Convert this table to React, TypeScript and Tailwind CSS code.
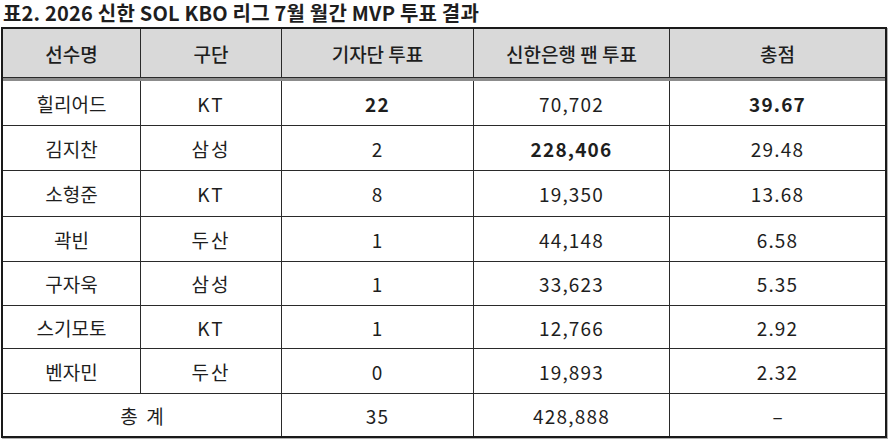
import React from "react";

const font = { fontFamily: '"Noto Sans CJK KR", "Noto Sans", sans-serif' };

type Row = { name: string; team: string; press: string; fan: string; total: string; bp?: boolean; bf?: boolean; bt?: boolean; h: string };

const rows: Row[] = [
  { name: "힐리어드", team: "KT", press: "22", fan: "70,702", total: "39.67", bp: true, bt: true, h: "h-[45px]" },
  { name: "김지찬", team: "삼성", press: "2", fan: "228,406", total: "29.48", bf: true, h: "h-[45px]" },
  { name: "소형준", team: "KT", press: "8", fan: "19,350", total: "13.68", h: "h-[46px]" },
  { name: "곽빈", team: "두산", press: "1", fan: "44,148", total: "6.58", h: "h-[45px]" },
  { name: "구자욱", team: "삼성", press: "1", fan: "33,623", total: "5.35", h: "h-[44px]" },
  { name: "스기모토", team: "KT", press: "1", fan: "12,766", total: "2.92", h: "h-[43px]" },
  { name: "벤자민", team: "두산", press: "0", fan: "19,893", total: "2.32", h: "h-[45px]" },
];

const cell = "flex items-center justify-center border-r border-b border-[#2a2a2a]";
const last = "flex items-center justify-center border-b border-[#2a2a2a]";
const num = "tracking-[1.2px]";

export default function App() {
  return (
    <div className="w-[890px] h-[447px] bg-white text-[#1e1e1e]" style={font}>
      <div className="h-[27px] pl-[3px] text-[20px] font-bold leading-[25px] tracking-[0.2px] whitespace-nowrap">
        표2. 2026 신한 SOL KBO 리그 7월 월간 MVP 투표 결과
      </div>
      <div className="ml-[1px] w-[886px] border-2 border-[#1a1a1a] shadow-[1px_1px_0_#b0b0b0] text-[19px] leading-none">
        <div className="grid grid-cols-[138px_141px_192px_196px_215px]">
          {["선수명", "구단", "기자단 투표", "신한은행 팬 투표"].map((t) => (
            <div key={t} className={`${cell} h-[49px] bg-[#d9d9d9] font-medium`}>{t}</div>
          ))}
          <div className={`${last} h-[49px] bg-[#d9d9d9] font-medium`}>총점</div>
          <div className="col-span-5 h-[3px] bg-[#8c8c8c]" />
          {rows.map((r) => (
            <React.Fragment key={r.name}>
              <div className={`${cell} ${r.h}`}>{r.name}</div>
              <div className={`${cell} ${r.h} tracking-[2px]`}>{r.team}</div>
              <div className={`${cell} ${r.h} ${num} ${r.bp ? "font-bold" : ""}`}>{r.press}</div>
              <div className={`${cell} ${r.h} ${num} ${r.bf ? "font-bold" : ""}`}>{r.fan}</div>
              <div className={`${last} ${r.h} ${num} ${r.bt ? "font-bold" : ""}`}>{r.total}</div>
            </React.Fragment>
          ))}
          <div className="col-span-2 flex h-[42px] items-center justify-center border-r border-[#2a2a2a]">총&nbsp; 계</div>
          <div className={`flex h-[42px] items-center justify-center border-r border-[#2a2a2a] ${num}`}>35</div>
          <div className={`flex h-[42px] items-center justify-center border-r border-[#2a2a2a] ${num}`}>428,888</div>
          <div className="flex h-[42px] items-center justify-center">–</div>
        </div>
      </div>
    </div>
  );
}
